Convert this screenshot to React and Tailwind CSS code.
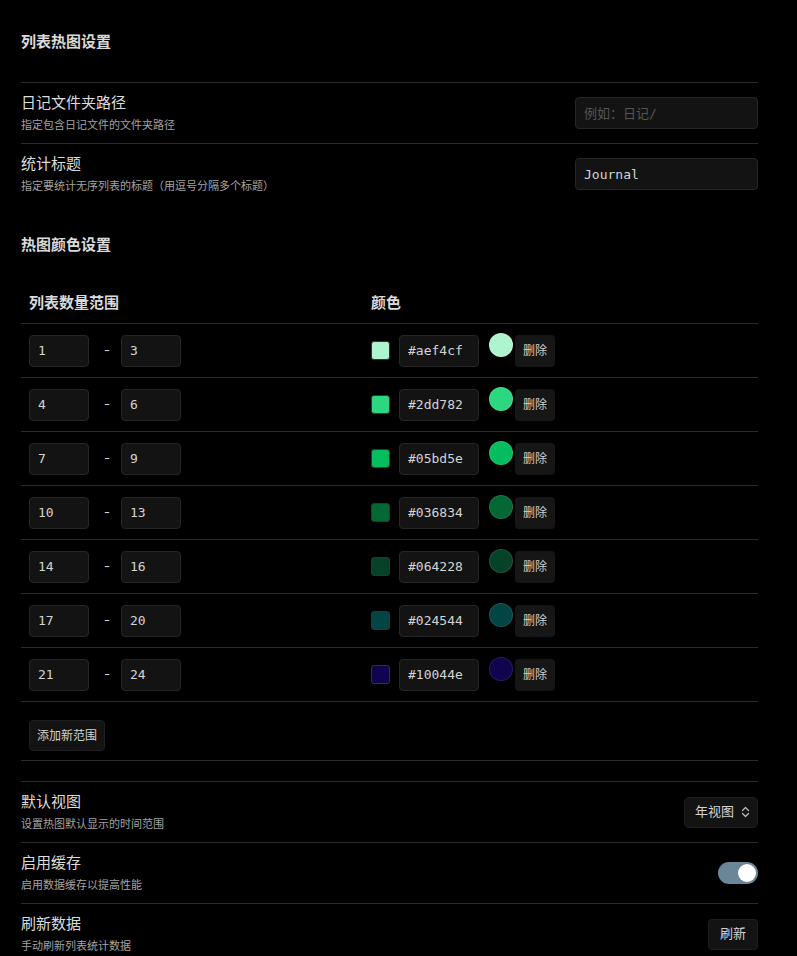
import { useState } from 'react'

const SANS = 'font-["Inter","Noto_Sans_CJK_SC",sans-serif]'
const MONO = 'font-["DejaVu_Sans_Mono","Noto_Sans_CJK_SC",monospace]'

const RANGES = [
  { min: 1, max: 3, color: '#aef4cf' },
  { min: 4, max: 6, color: '#2dd782' },
  { min: 7, max: 9, color: '#05bd5e' },
  { min: 10, max: 13, color: '#036834' },
  { min: 14, max: 16, color: '#064228' },
  { min: 17, max: 20, color: '#024544' },
  { min: 21, max: 24, color: '#10044e' },
]

const inputCls = `h-8 rounded-[4px] border border-[#262626] bg-[#131313] px-2 text-[13px] text-[#d4d4d4] outline-none ${MONO}`

function SettingRow({ name, desc, children, border = true }) {
  return (
    <div className={`flex items-center justify-between py-[10px] ${border ? 'border-t border-[#2b2b2b]' : ''}`}>
      <div>
        <div className="text-[15px] leading-5 text-[#dcdcdc]">{name}</div>
        <div className="mt-1 text-[11px] leading-4 text-[#a3a3a3]">{desc}</div>
      </div>
      {children}
    </div>
  )
}

export default function App() {
  const [ranges] = useState(RANGES)
  const [cache, setCache] = useState(true)

  return (
    <div className={`min-h-screen bg-black px-[21px] pt-8 text-[#dadada] ${SANS}`}>
      <div className="w-[737px]">
        <h1 className="text-[15px] font-bold leading-5 text-[#dadada]">列表热图设置</h1>

        <div className="mt-[30px] border-b border-[#2b2b2b]" />
        <SettingRow name="日记文件夹路径" desc="指定包含日记文件的文件夹路径" border={false}>
          <input className={`${inputCls} w-[183px] placeholder:text-[#555]`} placeholder="例如：日记/" />
        </SettingRow>
        <SettingRow name="统计标题" desc="指定要统计无序列表的标题（用逗号分隔多个标题）">
          <input className={`${inputCls} w-[183px]`} defaultValue="Journal" />
        </SettingRow>

        <h2 className="mt-[31px] text-[15px] font-bold leading-5 text-[#dadada]">热图颜色设置</h2>

        <div className="mt-7">
          <div className="grid grid-cols-[342px_1fr] border-b border-[#2b2b2b] py-[10px] text-[15px] font-bold leading-5 text-[#dadada]">
            <div className="px-2">列表数量范围</div>
            <div className="px-2">颜色</div>
          </div>
          {ranges.map((r) => (
            <div key={r.min} className="grid h-[54px] grid-cols-[342px_1fr] items-center border-b border-[#2b2b2b]">
              <div className="flex items-center px-2">
                <input className={`${inputCls} w-[60px]`} defaultValue={r.min} />
                <span className="w-8 pl-1 text-center text-[13px] text-[#d4d4d4]">-</span>
                <input className={`${inputCls} w-[60px]`} defaultValue={r.max} />
              </div>
              <div className="flex items-center px-2">
                <span className="h-[19px] w-[19px] rounded-[3px] border border-[#333]" style={{ backgroundColor: r.color }} />
                <input className={`${inputCls} ml-[9px] w-20`} defaultValue={r.color} />
                <span className="mb-[11px] ml-[10px] h-6 w-6 rounded-full border border-[#ffffff1a]" style={{ backgroundColor: r.color }} />
                <button className="ml-[2px] h-8 rounded-[4px] bg-[#161616] px-2 text-[12px] text-[#cfcfcf]">删除</button>
              </div>
            </div>
          ))}
          <div className="px-2 pt-[18px] pb-[9px]">
            <button className="h-[31px] rounded-[4px] border border-[#1f1f1f] bg-[#131313] px-[7px] text-[12px] text-[#d4d4d4]">添加新范围</button>
          </div>
          <div className="border-b border-[#2b2b2b]" />
        </div>

        <div className="mt-5">
          <SettingRow name="默认视图" desc="设置热图默认显示的时间范围">
            <button className="flex h-[31px] items-center gap-[7px] rounded-[5px] border border-[#1f1f1f] bg-[#131313] pl-[10px] pr-[7px] text-[13px] text-[#d4d4d4]">
              年视图
              <svg width="9" height="12" viewBox="0 0 9 12" fill="none" stroke="#bdbdbd" strokeWidth="1.2" strokeLinecap="round" strokeLinejoin="round">
                <path d="M1.5 4.5 4.5 1.5 7.5 4.5" />
                <path d="M1.5 7.5 4.5 10.5 7.5 7.5" />
              </svg>
            </button>
          </SettingRow>
          <SettingRow name="启用缓存" desc="启用数据缓存以提高性能">
            <button
              onClick={() => setCache(!cache)}
              className={`flex h-[22px] w-10 items-center rounded-full px-[2px] ${cache ? 'justify-end bg-[#6b8696]' : 'justify-start bg-[#3a3a3a]'}`}
            >
              <span className="h-[18px] w-[18px] rounded-full bg-white" />
            </button>
          </SettingRow>
          <SettingRow name="刷新数据" desc="手动刷新列表统计数据">
            <button className="h-[31px] rounded-[4px] border border-[#1f1f1f] bg-[#131313] px-[11px] text-[13px] text-[#d4d4d4]">刷新</button>
          </SettingRow>
        </div>
      </div>
    </div>
  )
}
